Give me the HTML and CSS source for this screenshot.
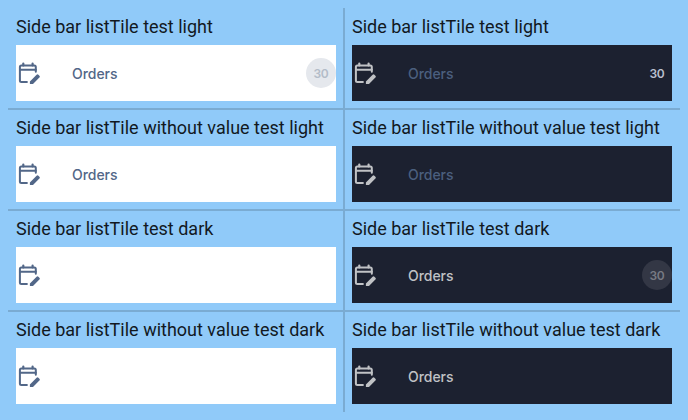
FILE: index.html
```html
<!DOCTYPE html>
<html lang="en">
<head>
<meta charset="utf-8">
<title>Side bar listTile</title>
<link rel="stylesheet" href="styles.css">
</head>
<body>
<svg width="0" height="0" class="defs">
  <symbol id="edit-calendar" viewBox="0 0 24 24">
    <g fill="none" stroke="currentColor" stroke-width="2" stroke-linecap="round" stroke-linejoin="round">
      <path d="M10.900 21.100H5.400Q3.900 21.100 3.900 19.600V6Q3.900 4.500 5.400 4.500H18.300Q19.800 4.500 19.800 6V10.800"/>
      <path d="M4 8.700H19.800"/>
      <path d="M7.300 4.500V2.500M16.600 4.500V2.500" stroke-width="2.200"/>
    </g>
    <path fill="currentColor" d="M13.900 22.900v-2.500l6.700-6.600q.9-.9 1.800 0l1 1q.9.900 0 1.800l-6.400 6.300z"/>
  </symbol>
</svg>
<main class="grid">
  <section class="cell">
    <h2 class="title">Side bar listTile test light</h2>
    <div class="tile tile-light"><svg class="icon"><use href="#edit-calendar"/></svg><span class="label">Orders</span><span class="badge">30</span></div>
  </section>
  <section class="cell">
    <h2 class="title">Side bar listTile test light</h2>
    <div class="tile tile-dark muted"><svg class="icon"><use href="#edit-calendar"/></svg><span class="label">Orders</span><span class="badge plain">30</span></div>
  </section>
  <section class="cell">
    <h2 class="title">Side bar listTile without value test light</h2>
    <div class="tile tile-light"><svg class="icon"><use href="#edit-calendar"/></svg><span class="label">Orders</span></div>
  </section>
  <section class="cell">
    <h2 class="title">Side bar listTile without value test light</h2>
    <div class="tile tile-dark muted"><svg class="icon"><use href="#edit-calendar"/></svg><span class="label">Orders</span></div>
  </section>
  <section class="cell">
    <h2 class="title">Side bar listTile test dark</h2>
    <div class="tile tile-light"><svg class="icon"><use href="#edit-calendar"/></svg></div>
  </section>
  <section class="cell">
    <h2 class="title">Side bar listTile test dark</h2>
    <div class="tile tile-dark"><svg class="icon"><use href="#edit-calendar"/></svg><span class="label">Orders</span><span class="badge">30</span></div>
  </section>
  <section class="cell">
    <h2 class="title">Side bar listTile without value test dark</h2>
    <div class="tile tile-light"><svg class="icon"><use href="#edit-calendar"/></svg></div>
  </section>
  <section class="cell">
    <h2 class="title">Side bar listTile without value test dark</h2>
    <div class="tile tile-dark"><svg class="icon"><use href="#edit-calendar"/></svg><span class="label">Orders</span></div>
  </section>
</main>
</body>
</html>
```

FILE: styles.css
```css
* {
  box-sizing: border-box;
}

body {
  margin: 0;
  padding: 8px;
  height: 420px;
  overflow: hidden;
  background: #90caf9;
  font-family: Roboto, sans-serif;
}

.defs {
  display: none;
}

.grid {
  display: grid;
  grid-template-columns: 336px 336px;
  grid-auto-rows: 101px;
}

.cell {
  padding: 7px;
  border: 1px solid #7aabd2;
}

.cell:nth-child(odd) {
  border-left: 0;
  padding-left: 8px;
}

.cell:nth-child(even) {
  border-right: 0;
  padding-right: 8px;
}

.cell:nth-child(-n+2) {
  border-top: 0;
  padding-top: 8px;
}

.cell:nth-last-child(-n+2) {
  border-bottom: 0;
  padding-bottom: 8px;
}

.title {
  margin: 0 0 8px;
  font-size: 18px;
  font-weight: 400;
  line-height: 21px;
  color: #12191f;
  white-space: nowrap;
}

.tile {
  display: flex;
  align-items: center;
  height: 56px;
}

.tile-light {
  background: #fff;
  color: #526788;
}

.tile-dark {
  background: #1c2130;
  color: #c0c2c5;
}

.icon {
  width: 24px;
  height: 24px;
  margin-right: 32px;
}

.label {
  padding-top: 2px;
  font-family: Inter, sans-serif;
  font-size: 14px;
  font-weight: 550;
  letter-spacing: -0.05px;
  line-height: 20px;
}

.muted .label {
  color: #4b5f7e;
}

.badge {
  display: flex;
  align-items: center;
  justify-content: center;
  width: 30px;
  height: 30px;
  margin-left: auto;
  border-radius: 50%;
  font-family: Inter, sans-serif;
  font-size: 12px;
  font-weight: 600;
  letter-spacing: -0.2px;
  background: #e5e8ed;
  color: #b3bcc8;
}

.tile-dark .badge {
  background: #333745;
  color: #777a83;
}

.tile-dark .plain {
  background: none;
  color: #b9bfcd;
}
```
